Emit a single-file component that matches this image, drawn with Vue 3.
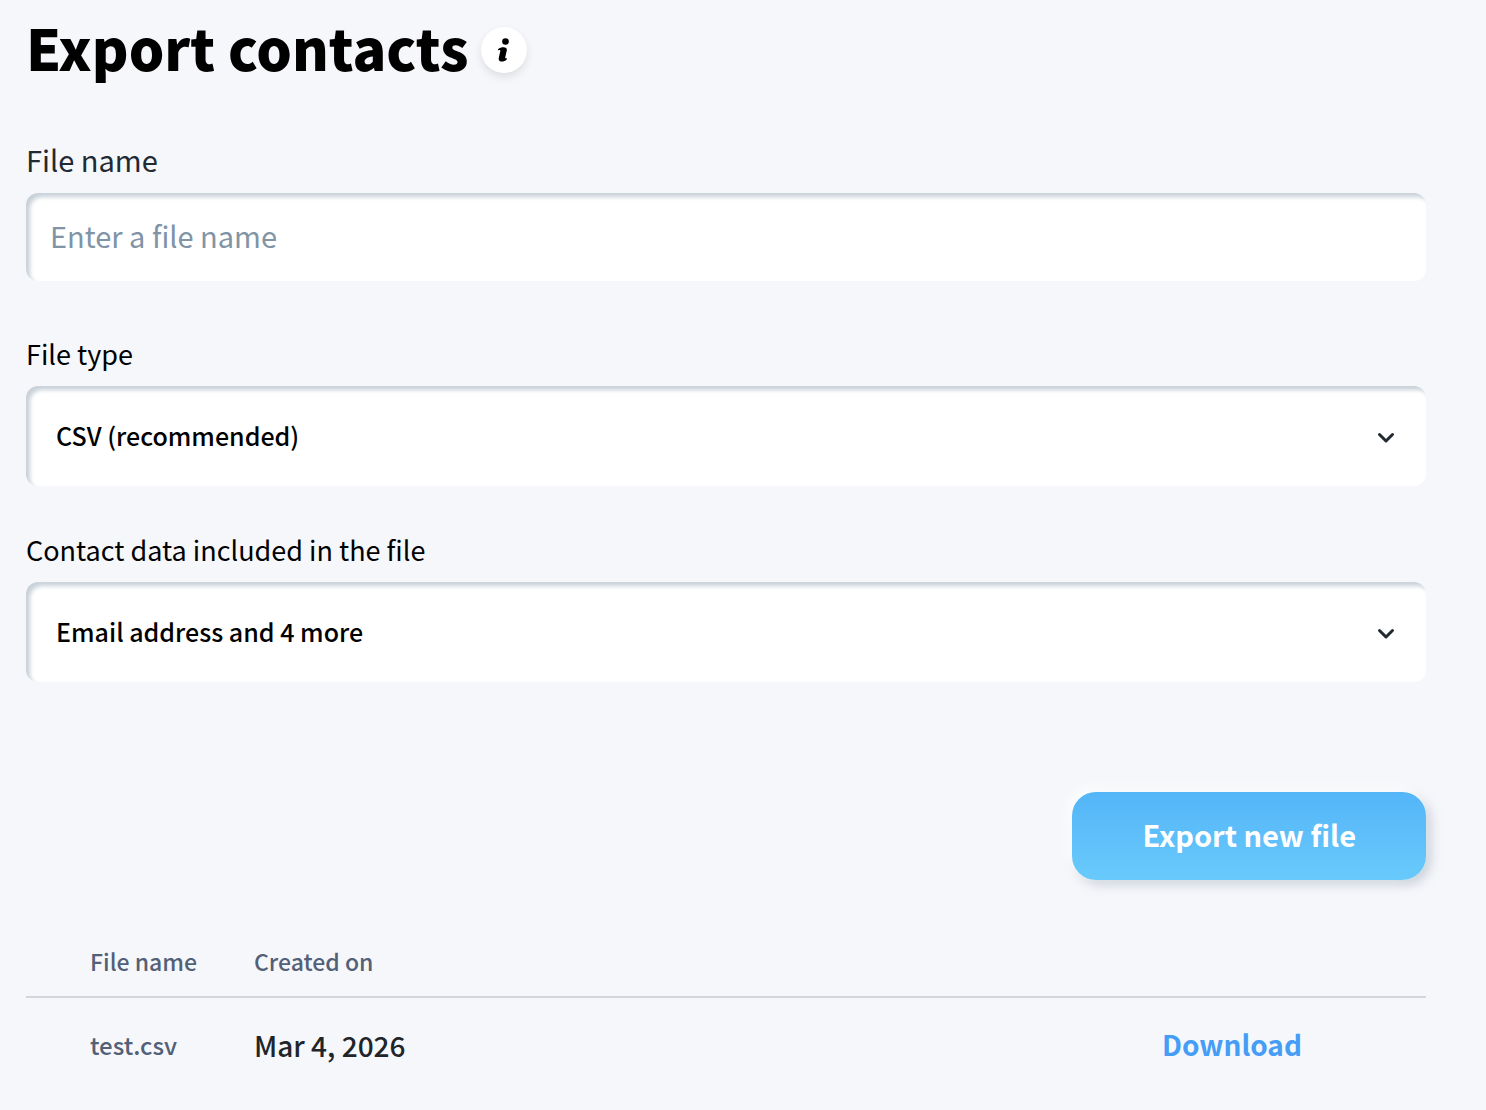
<template>
  <main class="export-page">
    <header class="page-header">
      <h1 class="page-title">Export contacts</h1>
      <button type="button" class="info-button" aria-label="About exporting contacts">
        <svg width="16" height="26" viewBox="0 0 16 26" aria-hidden="true">
          <circle cx="9.5" cy="4.5" r="3.3" />
          <path d="M2 12.2C4.2 10.5 6.6 10.1 8.6 10.4C10.5 10.7 11.1 11.8 10.8 13.4L9.3 20.1C9.1 21.3 9.7 21.7 10.9 21.1L10.7 22.4C9 24.2 6.6 24.9 4.7 24.4C2.9 23.9 2.4 22.5 2.8 20.7L4.2 14.4C4.5 13 3.8 12.6 2 13.5Z" />
        </svg>
      </button>
    </header>

    <form class="export-form" @submit.prevent="exportFile">
      <div class="field">
        <label class="field-label large" for="file-name">File name</label>
        <input
          id="file-name"
          v-model="fileName"
          class="control text-input"
          type="text"
          placeholder="Enter a file name"
        />
      </div>

      <div v-for="field in selectFields" :key="field.id" class="field">
        <label class="field-label" :for="field.id">{{ field.label }}</label>
        <div class="select-wrap">
          <select :id="field.id" v-model="field.value" class="control select-input">
            <option v-for="option in field.options" :key="option">{{ option }}</option>
          </select>
          <svg class="chevron" width="20" height="18" viewBox="0 0 20 18" aria-hidden="true">
            <path d="M3.5 7.5L10 14L16.5 7.5" />
          </svg>
        </div>
      </div>

      <button type="submit" class="export-button">Export new file</button>
    </form>

    <table class="files-table">
      <thead>
        <tr>
          <th class="name-col">File name</th>
          <th>Created on</th>
          <th class="action-col"></th>
        </tr>
      </thead>
      <tbody>
        <tr v-for="file in files" :key="file.name">
          <td class="name-col">{{ file.name }}</td>
          <td class="date-cell">{{ file.createdOn }}</td>
          <td class="action-col">
            <a href="#" class="download-link" @click.prevent>Download</a>
          </td>
        </tr>
      </tbody>
    </table>
  </main>
</template>

<script setup>
import { reactive, ref } from 'vue'

const fileName = ref('')

const selectFields = reactive([
  {
    id: 'file-type',
    label: 'File type',
    value: 'CSV (recommended)',
    options: ['CSV (recommended)']
  },
  {
    id: 'contact-data',
    label: 'Contact data included in the file',
    value: 'Email address and 4 more',
    options: ['Email address and 4 more']
  }
])

const files = ref([{ name: 'test.csv', createdOn: 'Mar 4, 2026' }])

const exportFile = () => {
  if (!fileName.value) return
  files.value.push({
    name: `${fileName.value}.csv`,
    createdOn: new Date().toLocaleDateString('en-US', { month: 'short', day: 'numeric', year: 'numeric' })
  })
  fileName.value = ''
}
</script>

<style>
body {
  background: #f6f7fb;
}
</style>

<style scoped>
.export-page {
  padding: 21px 60px 40px 26px;
  font-family: 'Noto Sans CJK JP', 'Noto Sans', sans-serif;
  color: #000;
}

.page-header {
  display: flex;
  align-items: flex-end;
  gap: 12px;
  margin-bottom: 67px;
}

.page-title {
  margin: 0;
  font-size: 56px;
  line-height: 52px;
  font-weight: 900;
}

.info-button {
  display: flex;
  align-items: center;
  justify-content: center;
  width: 46px;
  height: 46px;
  padding: 0;
  border: none;
  border-radius: 50%;
  background: #fff;
  box-shadow: 0 4px 8px rgba(0, 0, 0, 0.1);
  cursor: pointer;
}

.export-form {
  display: flex;
  flex-direction: column;
}

.field {
  display: flex;
  flex-direction: column;
  gap: 11px;
  margin-bottom: 43px;
}

.field:first-child {
  gap: 15px;
  margin-bottom: 52px;
}

.field-label {
  font-size: 27px;
  line-height: 42px;
}

.field-label.large {
  font-size: 29px;
  line-height: 38px;
  color: #212933;
}

.control {
  box-sizing: border-box;
  width: 100%;
  border: none;
  border-radius: 12px;
  background: #fff;
  box-shadow: inset 4px 4px 4px #c8d1d9;
  font-family: inherit;
  color: #000;
}

.text-input {
  height: 88px;
  padding: 0 24px 4px;
  font-size: 29px;
}

.text-input::placeholder {
  color: #8094a6;
  opacity: 1;
}

.select-wrap {
  display: grid;
  align-items: center;
}

.select-wrap > * {
  grid-area: 1 / 1;
}

.select-input {
  height: 100px;
  padding: 0 80px 2px 30px;
  appearance: none;
  font-size: 25px;
  font-weight: 500;
}

.chevron {
  justify-self: end;
  margin-right: 30px;
  fill: none;
  stroke: #212933;
  stroke-width: 3;
  stroke-linecap: round;
  stroke-linejoin: round;
  pointer-events: none;
}

.export-button {
  align-self: flex-end;
  height: 88px;
  margin-top: 67px;
  padding: 0 70px 4px;
  border: none;
  border-radius: 24px;
  background: linear-gradient(#54b5f8, #68cafb);
  box-shadow: -4px -4px 12px #fff, 4px 4px 12px rgba(100, 120, 140, 0.35);
  font-family: inherit;
  font-size: 29px;
  font-weight: 700;
  color: #fff;
  cursor: pointer;
}

.files-table {
  width: 100%;
  margin-top: 65px;
  border-collapse: collapse;
  table-layout: fixed;
  text-align: left;
  color: #526078;
}

.files-table th {
  padding: 0 0 19px;
  border-bottom: 2px solid #d2d6da;
  font-size: 23px;
  line-height: 32px;
  font-weight: 500;
}

.files-table td {
  padding: 26px 0 0;
  font-size: 24px;
  line-height: 40px;
  font-weight: 500;
}

.files-table .name-col {
  width: 164px;
  padding-left: 64px;
}

.files-table .action-col {
  width: 264px;
}

.files-table .date-cell {
  font-size: 28px;
  color: #212529;
}

.files-table .download-link {
  font-size: 28px;
  font-weight: 700;
  color: #459df5;
  text-decoration: none;
}
</style>
